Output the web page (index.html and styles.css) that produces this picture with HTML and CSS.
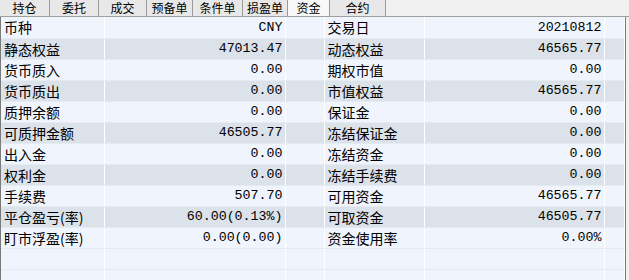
FILE: index.html
```html
<!DOCTYPE html>
<html lang="zh-CN">
  <head>
    <meta charset="utf-8">
    <title>资金</title>
    <link rel="stylesheet" href="styles.css">
  </head>
  <body>
    <div class="panel">
      <div class="tabs">
        <span class="tab">持仓</span>
        <span class="tab">委托</span>
        <span class="tab">成交</span>
        <span class="tab">预备单</span>
        <span class="tab">条件单</span>
        <span class="tab">损盈单</span>
        <span class="tab active">资金</span>
        <span class="tab">合约</span>
      </div>
      <div class="grid">
        <table>
          <colgroup>
            <col class="c-name"><col class="c-val"><col class="c-gap">
            <col class="c-name2"><col class="c-val2"><col>
          </colgroup>
          <tr><td class="name">币种</td><td class="num">CNY</td><td></td><td class="name">交易日</td><td class="num">20210812</td><td></td></tr>
          <tr><td class="name">静态权益</td><td class="num">47013.47</td><td></td><td class="name">动态权益</td><td class="num">46565.77</td><td></td></tr>
          <tr><td class="name">货币质入</td><td class="num">0.00</td><td></td><td class="name">期权市值</td><td class="num">0.00</td><td></td></tr>
          <tr><td class="name">货币质出</td><td class="num">0.00</td><td></td><td class="name">市值权益</td><td class="num">46565.77</td><td></td></tr>
          <tr><td class="name">质押余额</td><td class="num">0.00</td><td></td><td class="name">保证金</td><td class="num">0.00</td><td></td></tr>
          <tr><td class="name">可质押金额</td><td class="num">46505.77</td><td></td><td class="name">冻结保证金</td><td class="num">0.00</td><td></td></tr>
          <tr><td class="name">出入金</td><td class="num">0.00</td><td></td><td class="name">冻结资金</td><td class="num">0.00</td><td></td></tr>
          <tr><td class="name">权利金</td><td class="num">0.00</td><td></td><td class="name">冻结手续费</td><td class="num">0.00</td><td></td></tr>
          <tr><td class="name">手续费</td><td class="num">507.70</td><td></td><td class="name">可用资金</td><td class="num">46565.77</td><td></td></tr>
          <tr><td class="name">平仓盈亏(率)</td><td class="num">60.00(0.13%)</td><td></td><td class="name">可取资金</td><td class="num">46505.77</td><td></td></tr>
          <tr><td class="name">盯市浮盈(率)</td><td class="num">0.00(0.00)</td><td></td><td class="name">资金使用率</td><td class="num">0.00%</td><td></td></tr>
          <tr class="blank"><td></td><td></td><td></td><td></td><td></td><td></td></tr>
          <tr class="blank"><td></td><td></td><td></td><td></td><td></td><td></td></tr>
        </table>
      </div>
    </div>
  </body>
</html>
```

FILE: styles.css
```css
body { margin: 0; background: #f0f0f0; overflow: hidden; }
.panel { width: 629px; height: 280px; font-family: "Noto Sans CJK SC", sans-serif; }

.tabs { display: flex; height: 16px; border-bottom: 1px solid #a0a0a0; background: #f0f0f0; }
.tab { box-sizing: border-box; height: 16px; border-right: 1px solid #9a9a9a; background: #e8e8e8; font-size: 12px; line-height: 16px; text-align: center; color: #000; overflow: visible; }
.tab:nth-child(1) { width: 50px; }
.tab:nth-child(2) { width: 49px; }
.tab:nth-child(3) { width: 48px; }
.tab:nth-child(4) { width: 46px; }
.tab:nth-child(5) { width: 50px; }
.tab:nth-child(6) { width: 45px; }
.tab:nth-child(7) { width: 42px; }
.tab:nth-child(8) { width: 56px; }
.tab.active { background: #f8f8f8; }

.grid { width: 626px; height: 263px; border-left: 1px solid #7a7a7a; border-right: 1px solid #7a7a7a; box-sizing: border-box; background: #f0f5fc; overflow: hidden; }
table { width: 100%; border-collapse: collapse; table-layout: fixed; }
.c-name { width: 103px; }
.c-val { width: 181px; }
.c-gap { width: 39px; }
.c-name2 { width: 100px; }
.c-val2 { width: 180px; }
td { height: 21px; padding: 0; border-right: 1px solid #ffffff; border-bottom: 1px solid #e6ebf2; box-sizing: border-box; white-space: nowrap; overflow: hidden; }
tr:nth-child(odd) td { background: #f0f5fd; }
tr:nth-child(even) td { background: #dce2ea; }
tr.blank td { background: #f0f5fd; }
.name { font-size: 14px; padding-left: 3px; color: #000; }
.num { font-family: "Liberation Mono", monospace; font-size: 13.3px; text-align: right; padding-right: 2px; color: #000; }
```
